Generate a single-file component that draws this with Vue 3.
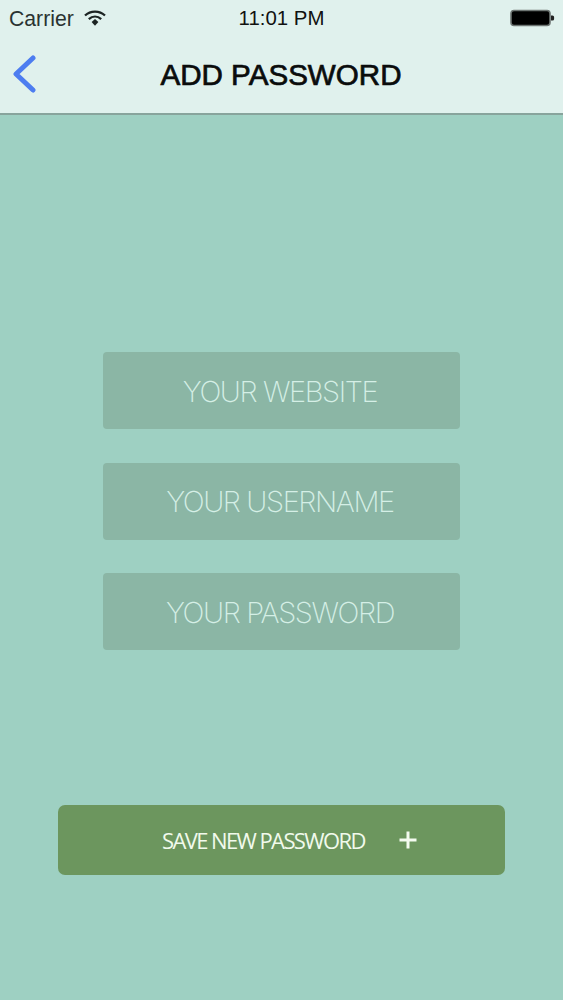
<script setup>
const fields = ['YOUR WEBSITE', 'YOUR USERNAME', 'YOUR PASSWORD']
</script>

<template>
  <div class="screen">
    <header class="top">
      <div class="status">
        <div class="status-left">
          <span class="carrier">Carrier</span>
          <svg class="wifi" width="24" height="18" viewBox="0 0 24 18" aria-hidden="true">
            <path d="M2 6.5 C7.5 1.2 16.5 1.2 22 6.5" fill="none" stroke="#1c2423" stroke-width="2.3" />
            <path d="M5.8 10.2 C9.5 6.8 14.5 6.8 18.2 10.2" fill="none" stroke="#1c2423" stroke-width="2.3" />
            <path d="M8.6 13 L12 9.9 L15.4 13 L12 16.8 Z" fill="#1c2423" />
          </svg>
        </div>
        <span class="time">11:01 PM</span>
        <svg class="battery" width="45" height="18" viewBox="0 0 45 18" aria-hidden="true">
          <rect x="1" y="1.5" width="39" height="15" rx="3" fill="#000" stroke="#6d7472" stroke-width="1.6" />
          <path d="M41 6.5 h1.5 a1.6 1.6 0 0 1 1.6 1.6 v1.8 a1.6 1.6 0 0 1 -1.6 1.6 H41 Z" fill="#222" />
        </svg>
      </div>
      <div class="nav">
        <svg class="back" width="26" height="38" viewBox="0 0 26 38" aria-hidden="true">
          <path d="M22 3 L5 19 L22 35" fill="none" stroke="#4d7df0" stroke-width="5" stroke-linecap="round" stroke-linejoin="round" />
        </svg>
        <h1 class="title">ADD PASSWORD</h1>
      </div>
    </header>

    <main class="body">
      <div class="fields">
        <div v-for="f in fields" :key="f" class="field"><span class="field-text">{{ f }}</span></div>
      </div>
      <button class="save" type="button">
        <span class="save-label">SAVE NEW PASSWORD</span>
        <svg class="plus" width="20" height="20" viewBox="0 0 20 20" aria-hidden="true">
          <path d="M10 1.5 V18.5 M1.5 10 H18.5" stroke="#f4fbf0" stroke-width="3" />
        </svg>
      </button>
    </main>
  </div>
</template>

<style>
html, body { margin: 0; background: #9ed0c2; }
</style>

<style scoped>
.screen {
  width: 563px;
  height: 1000px;
  background: #9ed0c2;
  display: flex;
  flex-direction: column;
  overflow: hidden;
  font-family: "Liberation Sans", Arial, sans-serif;
}
.top {
  height: 113px;
  flex: none;
  background: #e0f1ed;
  border-bottom: 2px solid #88a49c;
  display: flex;
  flex-direction: column;
}
.status {
  height: 37px;
  padding: 0 8px 0 9px;
  display: grid;
  grid-template-columns: 1fr auto 1fr;
  align-items: center;
}
.status-left { display: flex; align-items: center; gap: 9px; }
.carrier { font-size: 21.2px; color: #2a3331; }
.wifi { margin-top: -2px; }
.time { font-size: 20.4px; color: #111; margin-right: 1px; }
.battery { justify-self: end; margin-top: -1px; }
.nav {
  height: 76px;
  display: flex;
  align-items: center;
  justify-content: center;
  position: relative;
}
.back { position: absolute; left: 11px; top: 18px; }
.title {
  margin: -1px 1px 0 0;
  font-size: 29.6px;
  font-weight: 400;
  color: #0a0c0c;
  -webkit-text-stroke: 0.7px #0a0c0c;
}
.body {
  flex: 1;
  display: flex;
  flex-direction: column;
  align-items: center;
  padding-top: 237px;
}
.fields { display: flex; flex-direction: column; gap: 33.5px; }
.field {
  width: 357px;
  height: 77px;
  border-radius: 4px;
  background: #8bb6a5;
  color: #d5efe6;
  display: flex;
  align-items: center;
  justify-content: center;
  font-family: Inter, "Liberation Sans", sans-serif;
  font-weight: 200;
  font-size: 29px;
  letter-spacing: -1.4px;
}
.field-text { margin: 1px 3px 0 0; }
.save {
  margin-top: 154.5px;
  width: 447px;
  height: 70px;
  border: 0;
  border-radius: 7px;
  background: #6c965e;
  color: #f1faec;
  display: flex;
  align-items: center;
  padding: 0 0 0 104px;
  font-family: "Open Sans", sans-serif;
  font-size: 22px;
  letter-spacing: -1.6px;
}
.save-label { width: 236px; text-align: left; }
.plus { flex: none; }
</style>
